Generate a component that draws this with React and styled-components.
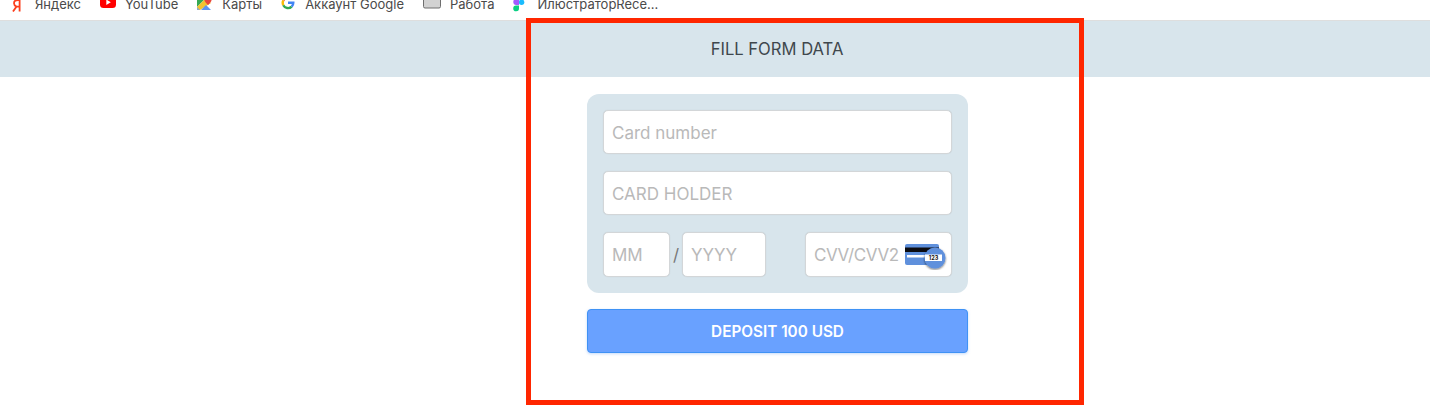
import React from 'react';
import styled, { createGlobalStyle } from 'styled-components';

const bookmarks = [
  { label: 'Яндекс', icon: <YandexIcon />, gap: '13px' },
  { label: 'YouTube', icon: <YoutubeIcon />, gap: '9px' },
  { label: 'Карты', icon: <MapsIcon />, gap: '10px' },
  { label: 'Аккаунт Google', icon: <GoogleIcon />, gap: '10px' },
  { label: 'Работа', icon: <FolderIcon />, gap: '9px' },
  { label: 'ИлюстраторRece...', icon: <FigmaIcon />, gap: '12px' },
];

function YandexIcon() {
  return (
    <svg width="10" height="12" viewBox="0 0 10 12">
      <path d="M7.600 11.500V0H6.200C3.500 0 2 1 2 3.200c0 1.800 1 2.700 2.500 3.400L1 11.500M7.600 6.600H4.500" fill="none" stroke="#fc3f1d" strokeWidth="1.800" />
    </svg>
  );
}

function YoutubeIcon() {
  return (
    <svg width="16" height="12" viewBox="0 0 16 12">
      <rect x="0" y="-5" width="16" height="13" rx="3.500" fill="#f00" />
      <path d="M6.300 -.5v5.500l4.500-2.750z" fill="#fff" />
    </svg>
  );
}

function MapsIcon() {
  return (
    <svg width="15" height="12" viewBox="0 0 15 12">
      <path d="M0 0h7L0 7z" fill="#35a853" />
      <path d="M0 7L7 0h3l4 3L3 10H0z" fill="#f3c22f" />
      <path d="M0 7l3 3H0z" fill="#8fa9c9" />
      <path d="M4 10L9 5l5 5z" fill="#5f94ee" />
      <path d="M11 -4a3.600 3.600 0 0 1 3.600 3.600C14.600 2 11 5 11 5S7.400 2 7.400-.4A3.600 3.600 0 0 1 11-4z" fill="#e8453c" />
    </svg>
  );
}

function GoogleIcon() {
  return (
    <svg width="14" height="12" viewBox="0 0 14 12">
      <g fill="none" strokeWidth="2.400">
        <path d="M10.700 -1A5.300 5.300 0 0 0 2.300 .4" stroke="#ea4335" />
        <path d="M2.300 .4A5.300 5.300 0 0 0 2.300 5.200" stroke="#fbbc05" />
        <path d="M2.300 5.200A5.300 5.300 0 0 0 10.700 6.600" stroke="#34a853" />
        <path d="M10.700 6.600A5.300 5.300 0 0 0 12.300 2.800H7" stroke="#4285f4" />
      </g>
    </svg>
  );
}

function FolderIcon() {
  return (
    <svg width="18" height="12" viewBox="0 0 18 12">
      <rect x="0.500" y="-6" width="17" height="14" rx="1.500" fill="#d2d2d2" stroke="#6e6e6e" />
    </svg>
  );
}

function FigmaIcon() {
  return (
    <svg width="12" height="12" viewBox="0 0 12 12">
      <circle cx="8.600" cy="2.200" r="2.700" fill="#1abcfe" />
      <path d="M6 -1v6H3.300a3 3 0 0 1 0-6z" fill="#a259ff" />
      <path d="M6 5.500v2.700a2.900 2.900 0 1 1-2.900-2.700z" fill="#0acf83" />
    </svg>
  );
}

function CvvIcon() {
  return (
    <svg width="44" height="30" viewBox="0 0 44 30">
      <defs>
        <filter id="coin" x="-30%" y="-30%" width="160%" height="160%">
          <feDropShadow dx="0" dy="1" stdDeviation="1" floodColor="#000" floodOpacity="0.6" />
        </filter>
      </defs>
      <rect x="0" y="4" width="34" height="21" rx="2" fill="#5f90dc" />
      <rect x="0" y="7.500" width="34" height="4.500" fill="#0b0b10" />
      <rect x="2" y="15" width="24" height="2.500" fill="#fff" />
      <circle cx="30" cy="18" r="10.500" fill="#5f90dc" filter="url(#coin)" />
      <rect x="20" y="14.500" width="17" height="6.500" fill="#fff" />
      <Cvc x="28.500" y="20" textAnchor="middle">123</Cvc>
    </svg>
  );
}

export default function App() {
  return (
    <>
      <GlobalStyle />
      <BookmarksBar>
        {bookmarks.map((b) => (
          <Bookmark key={b.label} $gap={b.gap}>
            {b.icon}
            <span>{b.label}</span>
          </Bookmark>
        ))}
      </BookmarksBar>
      <Band>
        <Title>FILL FORM DATA</Title>
      </Band>
      <Form>
        <Panel>
          <Field placeholder="Card number" />
          <Field placeholder="CARD HOLDER" />
          <BottomRow>
            <DateGroup>
              <Field $width="67px" placeholder="MM" />
              <Slash>/</Slash>
              <Field $width="84px" placeholder="YYYY" />
            </DateGroup>
            <CvvWrap>
              <Field $tight placeholder="CVV/CVV2" />
              <CvvBadge>
                <CvvIcon />
              </CvvBadge>
            </CvvWrap>
          </BottomRow>
        </Panel>
        <DepositButton>DEPOSIT 100 USD</DepositButton>
      </Form>
      <RedFrame />
    </>
  );
}

const GlobalStyle = createGlobalStyle`
  html, body {
    margin: 0;
    height: 420px;
    overflow: hidden;
    background: #fff;
    font-family: Inter, "Liberation Sans", sans-serif;
  }
  #root {
    position: relative;
    height: 420px;
  }
`;

const BookmarksBar = styled.div`
  box-sizing: border-box;
  height: 21px;
  display: flex;
  align-items: flex-start;
  gap: 19px;
  padding-left: 12px;
  overflow: hidden;
  border-bottom: 1px solid #dedede;
`;

const Bookmark = styled.div`
  display: flex;
  align-items: flex-start;
  gap: ${(p) => p.$gap};
  height: 12px;
  font-size: 13px;
  color: #4a4a4a;
  white-space: nowrap;

  span {
    display: block;
    line-height: 16px;
    margin-top: -4px;
  }
`;

const Band = styled.div`
  height: 56px;
  background: #d8e5ec;
  display: flex;
  align-items: center;
  justify-content: center;
  padding-left: 124px;
`;

const Title = styled.h1`
  margin: 0;
  font-size: 16.600px;
  font-weight: 400;
  color: #3f474d;
`;

const Form = styled.form`
  width: 381px;
  margin: 17px 0 0 587px;
  display: flex;
  flex-direction: column;
  gap: 16px;
`;

const Panel = styled.div`
  box-sizing: border-box;
  height: 199px;
  padding: 16px;
  display: flex;
  flex-direction: column;
  gap: 17px;
  background: #d8e5ec;
  border-radius: 12px;
`;

const Field = styled.input`
  box-sizing: border-box;
  width: ${(p) => p.$width || '100%'};
  height: 45px;
  padding: 1px 8px 0;
  font: 400 17px Inter, "Liberation Sans", sans-serif;
  letter-spacing: ${(p) => (p.$tight ? '-0.4px' : '0')};
  color: #333;
  background: #fff;
  border: 1px solid #d3d6d8;
  border-radius: 5px;
  box-shadow: 0 0 1px rgba(0, 0, 0, 0.12);
  outline: none;

  &::placeholder {
    color: #b9b9b9;
    opacity: 1;
  }
`;

const BottomRow = styled.div`
  display: flex;
  justify-content: space-between;
`;

const DateGroup = styled.div`
  display: flex;
  align-items: center;
`;

const Slash = styled.span`
  width: 12px;
  text-align: center;
  font-size: 17px;
  color: #777;
`;

const CvvWrap = styled.div`
  position: relative;
  width: 147px;
`;

const CvvBadge = styled.div`
  position: absolute;
  left: 100px;
  top: 8px;
  line-height: 0;
`;

const Cvc = styled.text`
  font: 700 5.500px Inter, "Liberation Sans", sans-serif;
  fill: #111;
`;

const DepositButton = styled.button`
  height: 44px;
  font: 600 15.300px Inter, "Liberation Sans", sans-serif;
  color: #fff;
  background: #69a1ff;
  border: 1px solid #3f92f5;
  border-radius: 4px;
  box-shadow: 0 1px 3px rgba(90, 150, 240, 0.35);
`;

const RedFrame = styled.div`
  position: absolute;
  left: 526px;
  top: 18px;
  width: 558px;
  height: 387px;
  box-sizing: border-box;
  border: 5px solid #ff2600;
  pointer-events: none;
`;
